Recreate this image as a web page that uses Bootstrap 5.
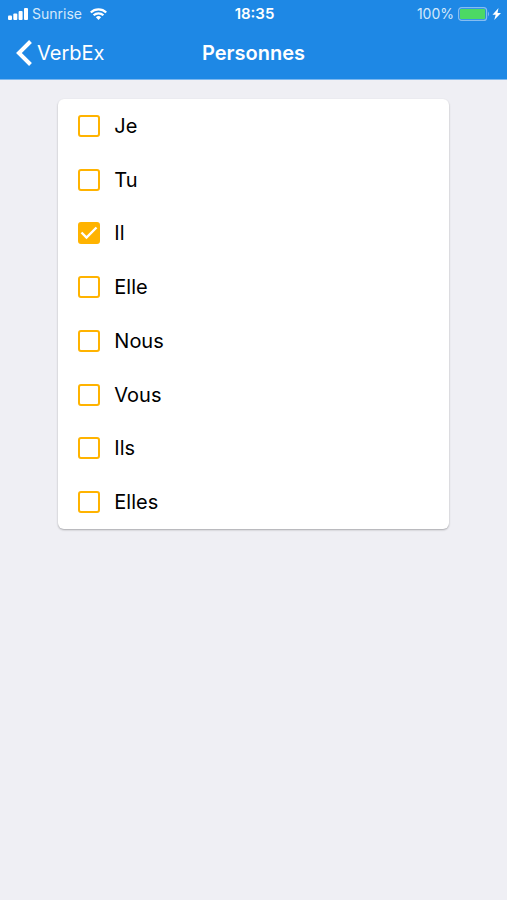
<!DOCTYPE html>
<html lang="fr">
<head>
<meta charset="utf-8">
<meta name="viewport" content="width=device-width, initial-scale=1">
<title>Personnes</title>
<link href="https://cdn.jsdelivr.net/npm/bootstrap@5.3.0/dist/css/bootstrap.min.css" rel="stylesheet">
<style>
body { font-family: Inter, "Liberation Sans", sans-serif; background: #efeff4; min-height: 100vh; color: #000; }
.app-header { background: #1e88e5; color: #fff; border-bottom: 1px solid #7db8ef; }
.status-bar { height: 27px; font-size: 14px; line-height: 20px; padding: 0 6px 0 8px; }
.status-bar > *, .title-bar > * { flex: 1 1 0; }
.status-bar .clock, .title-bar h1 { flex: 0 0 auto; font-weight: 600; }
.status-bar .clock { font-size: 15px; }
.status-text { color: #d3e8fb; }
.wifi { margin-left: 4px; }
.title-bar { height: 52px; padding: 0 16px; }
.title-bar h1 { font-size: 20px; line-height: 24px; }
.back-link { font-size: 20px; line-height: 24px; gap: 5px; }
.options { width: 77%; min-height: 430px; margin-top: 19px; border-radius: 6px; box-shadow: 0 1px 2px rgba(0,0,0,.3); }
.option { padding: 0 20px; gap: 14px; font-size: 20px; }
.option .form-check-input { width: 22px; height: 22px; margin: 0; border: 2px solid #ffb300; border-radius: 3px; }
.option .form-check-input:checked {
  background-color: #ffb300;
  background-size: 100% 100%;
  background-image: url("data:image/svg+xml,%3Csvg xmlns='http://www.w3.org/2000/svg' viewBox='0 0 18 18'%3E%3Cpath fill='none' stroke='%23fff' stroke-width='2.4' d='M1.500 8.500l5 5L16.500 3.500'/%3E%3C/svg%3E");
}
</style>
</head>
<body>
<header class="app-header">
  <div class="status-bar d-flex align-items-center">
    <div class="d-flex align-items-center gap-1">
      <svg width="20" height="12" viewBox="0 0 20 12" fill="#fff" aria-hidden="true"><rect y="7.500" width="4" height="4.500" rx="1"/><rect x="5.300" y="5.500" width="4" height="6.500" rx="1"/><rect x="10.600" y="3" width="4" height="9" rx="1"/><rect x="16" width="4" height="12" rx="1"/></svg>
      <span class="status-text">Sunrise</span>
      <svg class="wifi" width="17" height="12" viewBox="0 0 17 12" aria-hidden="true"><g fill="none" stroke="#fff" stroke-width="2.300"><path d="M.8 4.500a11 11 0 0 1 15.400 0"/><path d="M3.600 7.300a7 7 0 0 1 9.800 0"/></g><path fill="#fff" d="M5.900 9.200a3.700 3.700 0 0 1 5.200 0L8.500 12z"/></svg>
    </div>
    <span class="clock">18:35</span>
    <div class="d-flex align-items-center justify-content-end gap-1">
      <span class="status-text">100%</span>
      <svg width="43" height="14" viewBox="0 0 43 14" aria-hidden="true"><rect x=".6" y=".6" width="28" height="12.800" rx="3" fill="none" stroke="#86bdf1" stroke-width="1.200"/><rect x="2" y="2" width="25.200" height="10" rx="1" fill="#4cd964"/><path fill="#86bdf1" d="M30 4.500q2 2.500 0 5z"/><path fill="#fff" d="M40.500 1l-6 6.800h3.200l-1.500 5.200L43 6h-3.500z"/></svg>
    </div>
  </div>
  <nav class="title-bar d-flex align-items-center">
    <div class="d-flex"><a href="#" class="back-link d-flex align-items-center text-white text-decoration-none"><svg width="16" height="26" viewBox="0 0 16 26" fill="none" stroke="#fff" stroke-width="4" aria-hidden="true"><path d="M14.500 1.500L2.900 13l11.600 11.500"/></svg>VerbEx</a></div>
    <h1 class="m-0">Personnes</h1>
    <div></div>
  </nav>
</header>
<main>
  <form class="options d-grid bg-white mx-auto">
    <label class="option d-flex align-items-center"><input class="form-check-input" type="checkbox">Je</label>
    <label class="option d-flex align-items-center"><input class="form-check-input" type="checkbox">Tu</label>
    <label class="option d-flex align-items-center"><input class="form-check-input" type="checkbox" checked>Il</label>
    <label class="option d-flex align-items-center"><input class="form-check-input" type="checkbox">Elle</label>
    <label class="option d-flex align-items-center"><input class="form-check-input" type="checkbox">Nous</label>
    <label class="option d-flex align-items-center"><input class="form-check-input" type="checkbox">Vous</label>
    <label class="option d-flex align-items-center"><input class="form-check-input" type="checkbox">Ils</label>
    <label class="option d-flex align-items-center"><input class="form-check-input" type="checkbox">Elles</label>
  </form>
</main>
<script src="https://cdn.jsdelivr.net/npm/bootstrap@5.3.0/dist/js/bootstrap.bundle.min.js"></script>
</body>
</html>
